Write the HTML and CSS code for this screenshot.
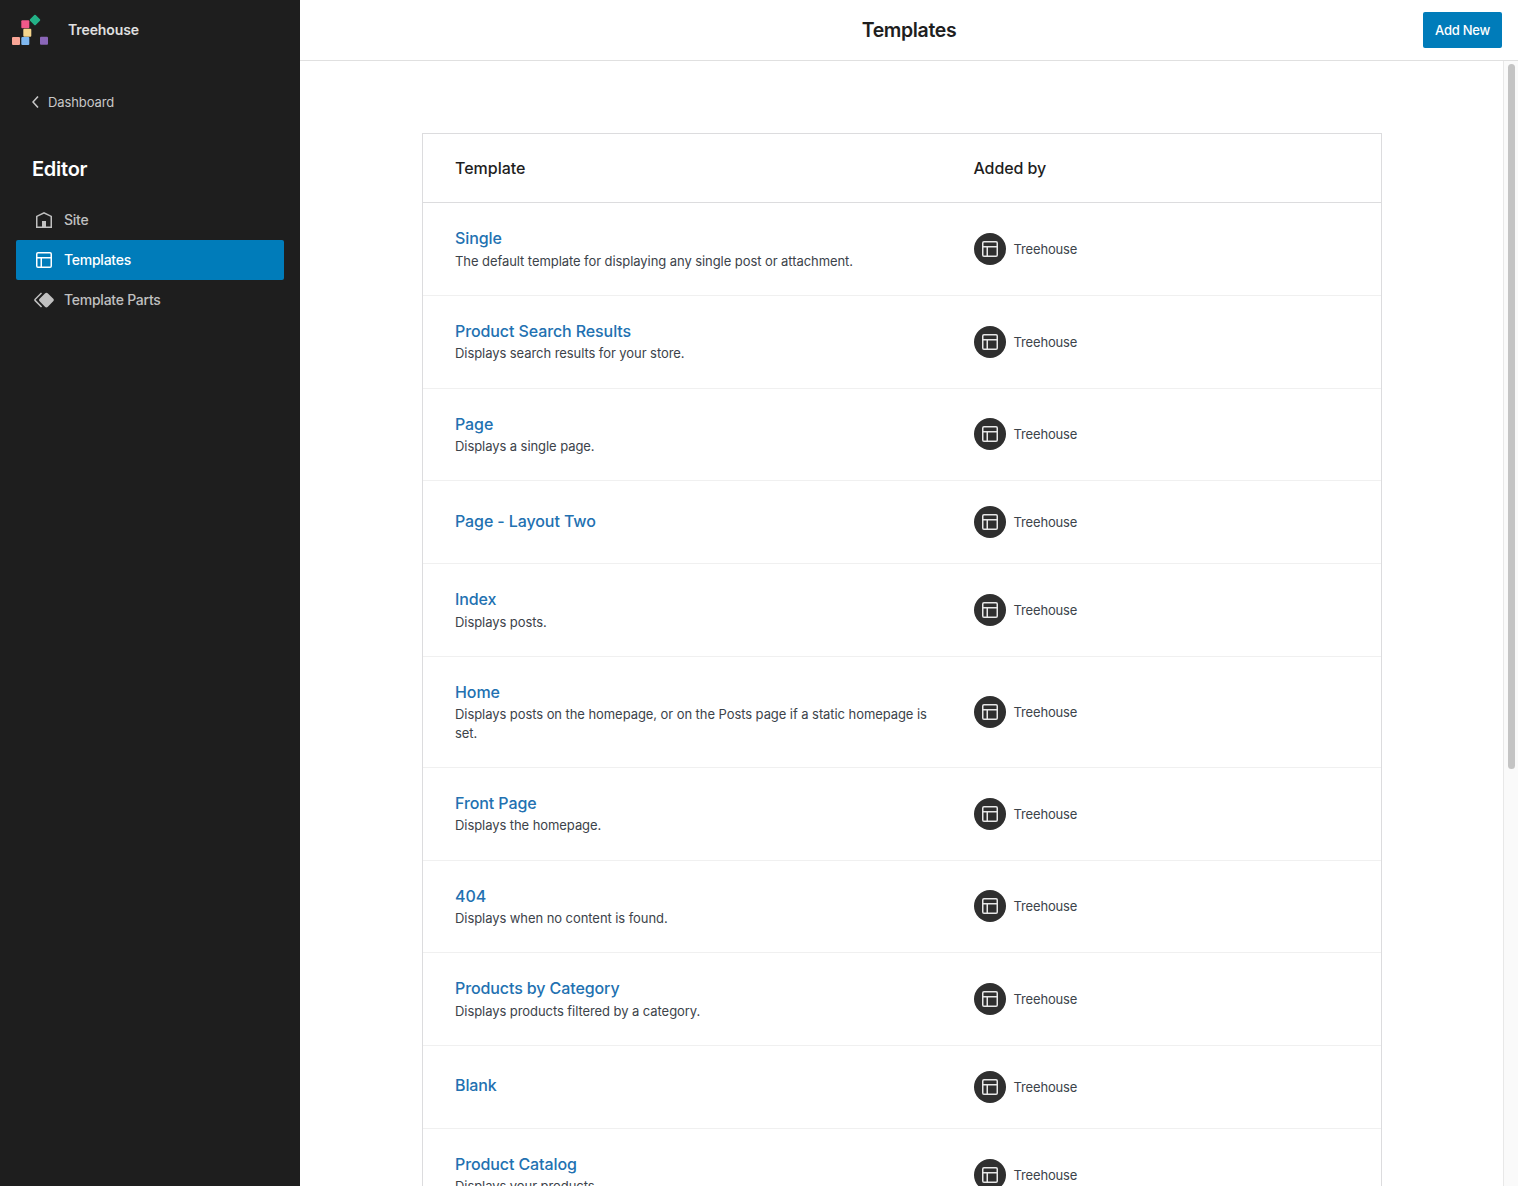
FILE: index.html
```html
<!DOCTYPE html>
<html lang="en">
<head>
<meta charset="utf-8">
<title>Templates</title>
<link rel="stylesheet" href="styles.css">
</head>
<body>
<svg class="defs" width="0" height="0" aria-hidden="true">
  <symbol id="i-layout" viewBox="0 0 24 24"><path d="M18 5.5H6a.5.5 0 00-.5.5v3h13V6a.5.5 0 00-.5-.5zm.5 5H10v8h8a.5.5 0 00.5-.5v-7.5zm-10 0h-3V18a.5.5 0 00.5.5h2.5v-8zM6 4h12a2 2 0 012 2v12a2 2 0 01-2 2H6a2 2 0 01-2-2V6a2 2 0 012-2z"/></symbol>
</svg>
<div class="app">
  <aside class="sidebar">
    <div class="brand">
      <svg class="brand-logo" width="60" height="60" viewBox="0 0 60 60" aria-hidden="true">
        <rect x="21.3" y="20.3" width="8" height="8" rx="1" fill="#f0588a"/>
        <rect x="31" y="16" width="8" height="8" rx="1" fill="#23b187" transform="rotate(45 35 20)"/>
        <rect x="23.3" y="28.7" width="8" height="8" rx="1" fill="#f5d58c"/>
        <rect x="12" y="37" width="8" height="8" rx="1" fill="#f9a596"/>
        <rect x="21.3" y="37" width="8" height="8" rx="1" fill="#7fb8f0"/>
        <rect x="40" y="36.7" width="8" height="8" rx="1" fill="#8a66b8"/>
      </svg>
      <span class="brand-name">Treehouse</span>
    </div>
    <a class="back" href="#">
      <svg width="24" height="24" viewBox="0 0 24 24" aria-hidden="true"><path d="M14.6 7l-1.2-1L8 12l5.4 6 1.2-1-4.6-5z"/></svg>
      <span>Dashboard</span>
    </a>
    <h2 class="side-title">Editor</h2>
    <nav class="nav">
      <a class="nav-item" href="#">
        <svg width="24" height="24" viewBox="0 0 24 24" aria-hidden="true"><path d="M12 4L4 7.9V20h16V7.9L12 4zm6.5 14.5H14V13h-4v5.5H5.5V8.8L12 5.7l6.5 3.1v9.7z"/></svg>
        <span class="nav-label">Site</span>
      </a>
      <a class="nav-item is-active" href="#">
        <svg width="24" height="24" aria-hidden="true"><use href="#i-layout"/></svg>
        <span class="nav-label">Templates</span>
      </a>
      <a class="nav-item" href="#">
        <svg width="24" height="24" viewBox="0 0 24 24" aria-hidden="true"><path d="M21.3 10.8l-5.6-5.6c-.7-.7-1.8-.7-2.5 0l-5.6 5.6c-.7.7-.7 1.8 0 2.5l5.6 5.6c.3.3.8.5 1.2.5s.9-.2 1.2-.5l5.6-5.6c.8-.7.8-1.9.1-2.5zm-17.6 1L10 5.5l-1-1-6.3 6.3c-.7.7-.7 1.8 0 2.5L9 19.5l1.1-1.1-6.3-6.3c-.2 0-.2-.2-.1-.3z"/></svg>
        <span class="nav-label">Template Parts</span>
      </a>
    </nav>
  </aside>
  <div class="main">
    <header class="topbar">
      <h1 class="page-title">Templates</h1>
      <a class="add-new" href="#">Add New</a>
    </header>
    <div class="body">
      <main class="content">
        <section class="table">
          <div class="row row-head">
            <div class="col-main">Template</div>
            <div class="col-author">Added by</div>
          </div>
          <div class="row">
            <div class="col-main"><a class="t-name" href="#">Single</a><p class="t-desc">The default template for displaying any single post or attachment.</p></div>
            <div class="col-author"><span class="avatar"><svg width="24" height="24"><use href="#i-layout"/></svg></span><span class="author">Treehouse</span></div>
          </div>
          <div class="row">
            <div class="col-main"><a class="t-name" href="#">Product Search Results</a><p class="t-desc">Displays search results for your store.</p></div>
            <div class="col-author"><span class="avatar"><svg width="24" height="24"><use href="#i-layout"/></svg></span><span class="author">Treehouse</span></div>
          </div>
          <div class="row">
            <div class="col-main"><a class="t-name" href="#">Page</a><p class="t-desc">Displays a single page.</p></div>
            <div class="col-author"><span class="avatar"><svg width="24" height="24"><use href="#i-layout"/></svg></span><span class="author">Treehouse</span></div>
          </div>
          <div class="row">
            <div class="col-main"><a class="t-name" href="#">Page - Layout Two</a></div>
            <div class="col-author"><span class="avatar"><svg width="24" height="24"><use href="#i-layout"/></svg></span><span class="author">Treehouse</span></div>
          </div>
          <div class="row">
            <div class="col-main"><a class="t-name" href="#">Index</a><p class="t-desc">Displays posts.</p></div>
            <div class="col-author"><span class="avatar"><svg width="24" height="24"><use href="#i-layout"/></svg></span><span class="author">Treehouse</span></div>
          </div>
          <div class="row">
            <div class="col-main"><a class="t-name" href="#">Home</a><p class="t-desc">Displays posts on the homepage, or on the Posts page if a static homepage is set.</p></div>
            <div class="col-author"><span class="avatar"><svg width="24" height="24"><use href="#i-layout"/></svg></span><span class="author">Treehouse</span></div>
          </div>
          <div class="row">
            <div class="col-main"><a class="t-name" href="#">Front Page</a><p class="t-desc">Displays the homepage.</p></div>
            <div class="col-author"><span class="avatar"><svg width="24" height="24"><use href="#i-layout"/></svg></span><span class="author">Treehouse</span></div>
          </div>
          <div class="row">
            <div class="col-main"><a class="t-name" href="#">404</a><p class="t-desc">Displays when no content is found.</p></div>
            <div class="col-author"><span class="avatar"><svg width="24" height="24"><use href="#i-layout"/></svg></span><span class="author">Treehouse</span></div>
          </div>
          <div class="row">
            <div class="col-main"><a class="t-name" href="#">Products by Category</a><p class="t-desc">Displays products filtered by a category.</p></div>
            <div class="col-author"><span class="avatar"><svg width="24" height="24"><use href="#i-layout"/></svg></span><span class="author">Treehouse</span></div>
          </div>
          <div class="row">
            <div class="col-main"><a class="t-name" href="#">Blank</a></div>
            <div class="col-author"><span class="avatar"><svg width="24" height="24"><use href="#i-layout"/></svg></span><span class="author">Treehouse</span></div>
          </div>
          <div class="row">
            <div class="col-main"><a class="t-name" href="#">Product Catalog</a><p class="t-desc">Displays your products.</p></div>
            <div class="col-author"><span class="avatar"><svg width="24" height="24"><use href="#i-layout"/></svg></span><span class="author">Treehouse</span></div>
          </div>
        </section>
      </main>
      <div class="scrollbar" aria-hidden="true"><div class="scrollbar-thumb"></div></div>
    </div>
  </div>
</div>
</body>
</html>
```
FILE: styles.css
```css
* { box-sizing: border-box; }
html, body { height: 100%; }
body {
  margin: 0;
  font-family: Inter, "Liberation Sans", sans-serif;
  color: #1e1e1e;
  background: #fff;
  overflow: hidden;
}
a { text-decoration: none; color: inherit; }
.defs { position: absolute; }

.app { display: flex; height: 100vh; }

.sidebar {
  flex: 0 0 300px;
  background: #1e1e1e;
  color: #c8c8c8;
}
.brand { display: flex; align-items: center; height: 60px; gap: 8px; padding-bottom: 1px; }
.brand-logo { flex: none; margin-top: 1px; }
.brand-name { font-size: 14px; font-weight: 600; letter-spacing: -0.1px; color: #e0e0e0; }

.back {
  display: flex;
  align-items: center;
  height: 24px;
  margin: 30px 0 0 24px;
  font-size: 13px;
  letter-spacing: -0.1px;
  color: #c8c8c8;
}
.back svg { fill: #c8c8c8; flex: none; }

.side-title {
  margin: 40px 0 0 32px;
  height: 30px;
  font-size: 20px;
  line-height: 30px;
  font-weight: 600;
  letter-spacing: -0.25px;
  color: #fff;
}
.nav { display: flex; flex-direction: column; margin: 16px 16px 0; }
.nav-item {
  display: flex;
  align-items: center;
  gap: 8px;
  height: 40px;
  padding: 0 16px;
  border-radius: 2px;
  font-size: 14px;
  font-weight: 500;
  letter-spacing: -0.25px;
  color: #c0c0c0;
}
.nav-item svg { fill: #c0c0c0; flex: none; }
.nav-label { padding-bottom: 2px; }
.nav-item.is-active { background: #007cba; color: #fff; }
.nav-item.is-active svg { fill: #fff; }

.main { flex: 1; min-width: 0; display: flex; flex-direction: column; }
.topbar {
  flex: 0 0 61px;
  display: flex;
  align-items: center;
  justify-content: flex-end;
  padding: 0 16px 1px 0;
  border-bottom: 1px solid #e0e0e0;
  position: relative;
}
.page-title {
  position: absolute;
  left: 0;
  right: 0;
  top: 0;
  margin: 0;
  text-align: center;
  font-size: 19.5px;
  line-height: 60px;
  font-weight: 600;
  letter-spacing: -0.35px;
  color: #1e1e1e;
}
.add-new {
  position: relative;
  display: flex;
  align-items: center;
  height: 36px;
  padding: 0 12px;
  background: #007cba;
  border-radius: 2px;
  color: #fff;
  font-size: 13px;
  font-weight: 500;
  letter-spacing: -0.25px;
}

.body { flex: 1; min-height: 0; display: flex; }
.content {
  flex: 1;
  min-width: 0;
  overflow: hidden;
  padding-top: 72px;
}
.scrollbar {
  flex: 0 0 15px;
  padding: 3px 3px 3px 4px;
  background: #fafafa;
  border-left: 1px solid #e8e8e8;
}
.scrollbar-thumb {
  height: 705px;
  border-radius: 4px;
  background: #c4c4c4;
}

.table {
  width: 960px;
  margin: 0 auto;
  border: 1px solid #dcdcde;
  background: #fff;
}
.row {
  display: flex;
  align-items: center;
  min-height: 82.6px;
  padding: 24px 0 24px 32.5px;
  border-bottom: 1px solid #f0f0f0;
}
.row-head {
  min-height: 69px;
  padding-top: 0;
  padding-bottom: 0;
  border-bottom-color: #dcdcde;
  font-size: 16px;
  font-weight: 500;
  color: #1e1e1e;
}
.row-head .col-author { letter-spacing: -0.1px; }
.col-main { flex: 0 0 518.5px; padding-right: 32px; }
.col-author { display: flex; align-items: center; gap: 8px; }

.t-name {
  display: block;
  margin-bottom: 2.86px;
  font-size: 16px;
  line-height: 22.4px;
  font-weight: 500;
  letter-spacing: -0.1px;
  color: #2271b1;
}
.t-desc {
  margin: 0;
  padding-bottom: 0.3px;
  position: relative;
  top: -0.7px;
  font-size: 13px;
  line-height: 18.22px;
  letter-spacing: -0.07px;
  color: #3c434a;
}
.avatar {
  display: flex;
  align-items: center;
  justify-content: center;
  width: 32px;
  height: 32px;
  border-radius: 50%;
  background: #2f2f2f;
}
.avatar svg { fill: #e8e8e8; }
.author { font-size: 13px; letter-spacing: -0.15px; color: #3c434a; }
```
